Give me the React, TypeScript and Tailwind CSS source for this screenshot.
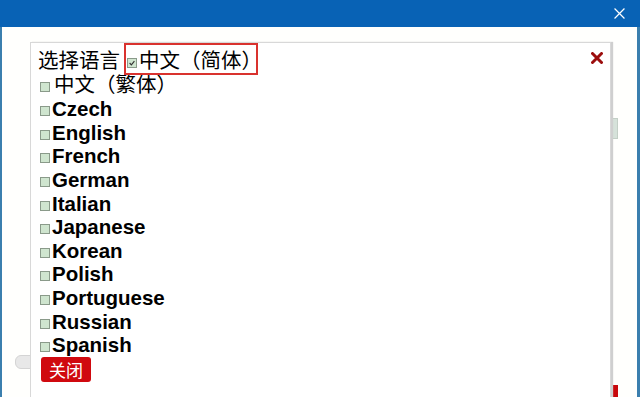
import React from "react";

const languages = [
  "Czech",
  "English",
  "French",
  "German",
  "Italian",
  "Japanese",
  "Korean",
  "Polish",
  "Portuguese",
  "Russian",
  "Spanish",
];

function Box({ checked = false }: { checked?: boolean }) {
  return (
    <span className="relative inline-block w-[10px] h-[10px] border border-[#8a9a8a] bg-[#cfe5cf] mr-[2px] ml-[2px]">
      {checked && (
        <svg viewBox="0 0 10 10" className="absolute inset-0 w-full h-full">
          <path d="M2 5 L4.2 7.3 L8 2.6" fill="none" stroke="#333" strokeWidth="1.4" />
        </svg>
      )}
    </span>
  );
}

export default function App() {
  const cjk = {
    fontFamily: '"Noto Sans CJK SC", sans-serif',
  } as React.CSSProperties;

  return (
    <div className="relative w-[640px] h-[397px] overflow-hidden bg-white flex flex-col">
      <div className="h-[27px] bg-[#0862b5] flex items-center justify-end pr-[15px] shrink-0">
        <svg viewBox="0 0 10 10" className="w-[11px] h-[11px]">
          <path d="M0.5 0.5 L9.5 9.5 M9.5 0.5 L0.5 9.5" stroke="#ffffff" strokeWidth="1.1" />
        </svg>
      </div>

      <div className="relative flex-1 border-l-2 border-r-[3px] border-[#3b7fae] bg-[#fffffd]">
        {/* bits of the page behind the panel */}
        <div className="absolute left-[606px] top-[91px] w-[10px] h-[21px] bg-[#d6e2da] border border-[#c3cfc6]" />
        <div className="absolute left-[13px] top-[328px] w-[16px] h-[14px] rounded-l-[6px] bg-[#e8e8e8] border border-[#d4d4d4]" />
        <div className="absolute left-[607px] top-[358px] w-[9px] h-[14px] rounded-tl-[4px] bg-[#c8080c]" />

        <div className="relative ml-[28px] mt-[15px] w-[581px] h-[400px] bg-white border border-[#d8d8d8] shadow-[2px_0_1px_#cfcfcf] pt-[5px] pl-[7px] text-[20.5px] leading-[23.6px] text-black">
          <svg viewBox="0 0 12 12" className="absolute right-[7px] top-[9px] w-[12px] h-[12px]">
            <path d="M1.5 1.5 L10.5 10.5 M10.5 1.5 L1.5 10.5" stroke="#9c0e0e" strokeWidth="3" strokeLinecap="round" />
          </svg>

          <div style={cjk}>
            <span>选择语言</span>
            <span className="relative ml-[5px]">
              <span className="absolute -left-[1px] right-[4px] -top-[1px] -bottom-[1px] border-2 border-[#d9322e]" />
              <Box checked />
              <span>中文（简体）</span>
            </span>
          </div>
          <div style={cjk} className="mb-[2px]">
            <Box />
            <span className="ml-[2px]">中文（繁体）</span>
          </div>
          {languages.map((lang) => (
            <div key={lang} className="font-bold" style={{ fontFamily: '"Liberation Sans", Arial, sans-serif' }}>
              <Box />
              <span>{lang}</span>
            </div>
          ))}
          <button
            className="ml-[3px] w-[50px] h-[25px] rounded-[3px] bg-[#d0090f] text-white text-[17px] leading-[25px] text-center"
            style={cjk}
          >
            关闭
          </button>
        </div>
      </div>
    </div>
  );
}
